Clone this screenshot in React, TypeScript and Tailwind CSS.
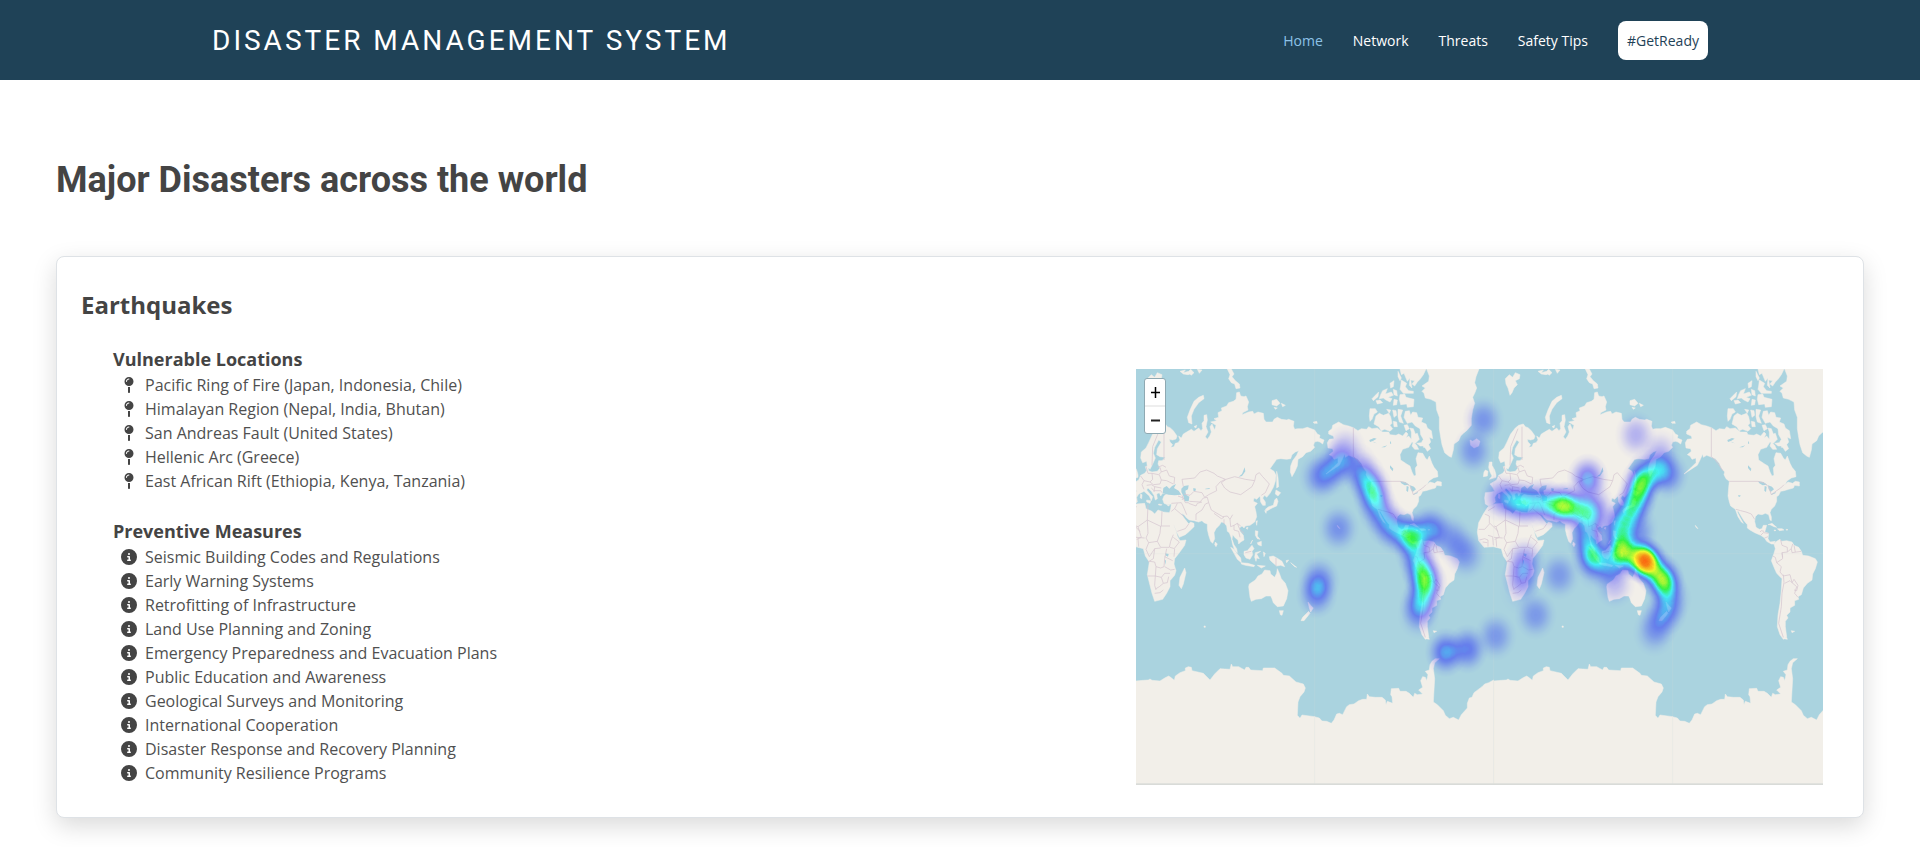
import React from "react";
import { FaMapPin, FaCircleInfo } from "react-icons/fa6";

const locations = [
  "Pacific Ring of Fire (Japan, Indonesia, Chile)",
  "Himalayan Region (Nepal, India, Bhutan)",
  "San Andreas Fault (United States)",
  "Hellenic Arc (Greece)",
  "East African Rift (Ethiopia, Kenya, Tanzania)",
];

const measures = [
  "Seismic Building Codes and Regulations",
  "Early Warning Systems",
  "Retrofitting of Infrastructure",
  "Land Use Planning and Zoning",
  "Emergency Preparedness and Evacuation Plans",
  "Public Education and Awareness",
  "Geological Surveys and Monitoring",
  "International Cooperation",
  "Disaster Response and Recovery Planning",
  "Community Resilience Programs",
];

// Eastern hemisphere coastlines, lon 0 at x=48, lon 180 at x=584.
const eastLand = [
  // Eurasia
  "M136 192L142 200 150 203 160 212 171 228 168 237 158 240 148 238 150 246 158 254 152 262 162 260 166 250 174 248 180 240 176 228 184 234 190 222 200 216 214 208 222 214 236 204 243 212 248 206 246 190 252 182 252 166 260 164 262 180 258 200 264 216 256 230 262 238 269 228 274 216 270 200 276 192 284 210 288 196 272 186 290 182 282 176 296 172 294 158 306 152 304 144 320 138 326 128 340 124 348 118 350 98 358 96 362 108 372 110 378 108 386 126 382 140 384 150 368 158 366 164 386 156 398 154 402 162 414 156 430 160 432 178 438 186 458 186 462 178 472 172 484 178 500 180 506 178 522 184 520 198 524 208 532 206 548 206 562 202 584 210 592 222 600 226 598 234 612 240 608 252 600 246 592 244 584 246 580 256 584 262 572 274 558 278 548 290 534 298 532 318 524 336 516 350 511 336 512 318 518 302 530 286 536 272 526 276 516 284 512 296 500 298 482 296 470 298 460 312 450 326 462 334 468 346 466 364 460 382 450 400 440 412 434 406 428 414 436 426 436 436 428 436 422 426 420 408 410 418 402 414 400 424 412 430 404 440 408 456 410 470 404 486 390 496 376 498 372 504 366 498 358 504 360 514 370 526 372 540 362 546 356 552 354 540 346 534 338 524 336 538 342 554 350 566 352 578 344 570 338 554 334 534 328 518 322 514 320 498 312 488 304 486 298 496 288 506 282 518 284 536 278 550 272 544 266 526 262 508 262 492 252 488 246 482 236 486 222 482 208 480 200 474 192 464 184 460 192 474 200 484 206 492 212 486 222 490 222 500 208 514 196 524 178 532 172 520 164 500 152 476 148 460 152 446 154 432 142 434 132 430 128 418 132 408 140 402 128 400 122 408 118 398 110 402 112 416 106 420 102 406 94 394 84 384 80 390 90 402 98 410 94 422 88 408 72 394 64 398 56 402 50 412 52 426 42 434 32 438 22 432 20 414 22 398 40 396 50 394 44 382 36 372 46 366 56 360 62 346 74 340 80 332 76 320 84 318 86 332 96 336 112 334 120 324 114 312 116 302 126 302 136 292 120 290 110 284 112 266 124 246 116 240 104 262 100 280 106 294 98 312 90 328 82 320 80 304 68 308 62 294 64 276 78 264 86 248 98 222 112 204 122 196Z",
  // Africa
  "M30 440L48 432 74 430 78 446 96 454 104 462 114 450 130 456 148 458 152 470 160 492 168 512 172 528 180 542 198 540 194 556 178 578 164 596 162 612 168 632 164 646 150 662 150 680 140 700 128 718 104 724 96 700 88 668 82 644 88 606 76 588 70 566 46 560 18 562 2 542 -2 516 2 488 16 462Z",
  "M194 624L198 638 190 672 184 686 177 676 180 652Z",
  // British Isles
  "M34 306L42 306 42 316 50 330 54 344 54 352 34 358 42 348 36 336 32 322Z",
  "M22 330L30 334 28 348 16 350 18 336Z",
  // Mediterranean islands
  "M80 420L92 422 90 430 80 426ZM62 402L66 404 65 416 61 414ZM116 432L126 434 124 436 116 435ZM142 436L148 434 147 438Z",
  // Svalbard and Arctic islands
  "M82 56L94 44 104 52 112 38 126 44 124 56 112 62 118 74 108 84 102 98 96 106 90 84 84 72Z",
  "M250 106L252 116 236 128 222 148 214 168 216 192 206 188 202 172 210 150 222 124 236 112Z",
  "M180 34L196 30 190 38 206 34 212 28 222 38 204 44 190 42ZM232 28L246 30 238 40ZM206 38L220 40 214 46Z",
  "M322 27L334 27 342 42 336 50 346 62 358 72 360 84 348 86 344 72 334 68 326 56 330 44Z",
  "M456 122L470 118 480 130 470 138 456 134ZM484 130L496 136 488 140ZM462 142L472 144 466 148ZM580 186L590 184 592 190 582 190ZM222 200L230 196 228 204Z",
  // Japan and Sakhalin
  "M436 448L446 440 460 436 464 420 470 414 474 424 470 438 456 444 442 452ZM468 390L482 398 474 408 466 402ZM434 452L440 450 438 460ZM470 334L474 352 476 380 470 384 470 360Z",
  "M408 484L412 482 410 496ZM378 504L384 502 382 508ZM286 546L292 552 288 560 284 554Z",
  // Maritime Southeast Asia
  "M406 512L414 514 412 528 420 538 412 536 406 526ZM412 548L424 544 424 558 414 554ZM398 540L392 552 394 546Z",
  "M332 562L340 566 352 582 362 594 364 608 352 598 342 580ZM364 608L384 610 404 616 402 620 376 616 364 612ZM372 574L382 572 396 556 402 566 396 574 398 584 390 598 378 594 372 584ZM406 578L422 574 410 582 418 596 410 594 408 604 404 592ZM412 616L436 618 424 624ZM430 576L436 580 432 590Z",
  "M448 590L460 588 474 596 486 604 494 620 482 616 470 618 456 606 450 600ZM498 602L506 600 500 608ZM512 608L530 622 524 620Z",
  // Australia and New Zealand
  "M472 626L478 640 484 656 496 670 504 692 500 716 490 738 472 740 460 728 456 716 452 708 438 708 424 716 408 718 394 724 390 712 386 680 388 672 406 660 414 648 426 642 434 630 450 632 452 642 464 652 470 640ZM478 752L490 752 486 766 481 764Z",
  "M564 726L572 736 580 744 572 756 568 744ZM566 754L570 760 552 782 543 782 548 772ZM252 798L256 798 256 802 252 802Z",
  // Antarctica
  "M47 963L70 961 85 960 90 957 96 961 120 963 134 954 146 948 152 952 163 961 166 948 180 938 196 932 196 924 205 920 214 922 216 932 250 940 258 948 270 960 284 942 300 926 330 928 334 912 338 920 356 920 374 930 378 922 386 922 392 930 428 932 430 924 464 924 486 940 490 946 508 948 528 966 550 972 556 984 552 996 540 1010 534 1026 532 1066 540 1075 546 1065 584 1070V1275H47Z",
].join("");

// Western hemisphere coastlines, lon -180 at x=248, lon 0 at x=785.
const westLand = [
  // Mainland North America
  "M320 186L334 194 350 198 364 203 378 212 388 206 404 208 410 200 420 206 436 204 446 212 452 216 470 216 474 224 492 226 500 222 512 228 522 216 528 222 522 234 530 228 538 238 538 216 534 204 544 206 550 222 556 220 562 238 550 250 540 246 530 262 512 268 504 284 506 300 524 312 534 318 540 336 546 348 552 346 550 324 556 316 552 296 558 278 572 280 580 294 586 300 592 288 600 310 606 322 616 334 618 350 604 354 592 362 584 374 594 366 608 370 616 364 628 366 628 378 614 376 610 384 596 388 582 392 572 394 566 406 560 410 560 424 554 438 544 448 540 458 544 470 544 482 540 480 536 464 526 460 516 464 504 462 496 470 494 484 498 502 508 508 516 506 520 496 530 496 526 510 524 516 536 520 534 536 540 546 556 544 552 552 544 552 530 544 524 534 512 526 494 518 480 510 472 504 472 494 462 482 452 466 444 452 442 456 450 472 460 490 454 486 444 470 436 448 422 438 418 426 414 408 416 382 418 364 408 356 402 344 404 336 394 324 388 310 376 296 366 292 350 286 340 292 338 282 330 300 322 316 306 326 282 342 302 324 318 308 318 294 306 298 300 288 292 284 304 274 302 266 288 264 286 248 292 238 306 236 304 228 290 222 290 214 300 206 302 196Z",
  // Caribbean
  "M534 494L546 490 560 502 552 500 540 494ZM562 506L576 506 582 510 568 512ZM552 510L558 511 554 513ZM588 508L594 509 590 511ZM316 496L324 506 318 502Z",
  // South America
  "M552 552L560 544 570 538 574 544 590 542 606 546 612 556 626 562 634 574 638 586 656 588 676 596 682 606 676 626 668 642 666 660 652 670 640 684 634 704 624 710 626 718 614 722 614 736 600 744 600 756 590 766 594 774 586 784 586 800 590 830 580 838 570 824 562 800 564 764 570 730 574 690 576 656 560 640 552 622 544 602 552 580 556 566Z",
  "M604 812L614 814 606 818ZM580 836L590 832 592 838Z",
  // Greenland and Iceland
  "M584 27H741L732 50 728 68 734 84 728 100 722 112 728 130 722 150 718 176 718 196 704 212 696 218 686 228 680 242 666 252 664 270 658 292 650 288 638 278 630 254 626 232 622 206 622 172 614 150 612 126 596 118 580 114 576 100 570 94 580 84 570 78 590 64 592 48Z",
  "M714 240L722 244 734 236 744 244 740 258 726 264 716 256Z",
  // Canadian archipelago
  "M504 27H582L574 44 564 58 556 66 548 78 540 72 548 62 536 60 540 84 532 76 534 54 526 64 516 40 508 44ZM498 34L508 54 504 62 498 50ZM508 60L524 70 520 80 530 92 544 94 544 100 514 100 504 88 506 78Z",
  "M504 104L518 102 522 112 546 118 544 140 526 142 524 132 506 134 502 118ZM474 70L486 62 484 80 476 84ZM452 92L466 86 460 102 478 96 484 106 468 112 480 116 474 126 462 120 454 114 442 116 446 104ZM430 106L440 96 438 110 424 122 420 116ZM484 88L494 92 496 108 486 104ZM486 118L496 120 494 134 484 136ZM432 122L444 120 452 128 436 132Z",
  "M414 146L430 146 436 156 426 162 420 178 414 184 412 168ZM432 168L442 160 454 166 470 160 476 170 480 190 474 196 482 206 474 214 458 208 448 212 440 200 426 192ZM482 150L492 152 494 166 486 172ZM498 148L512 150 506 168 514 190 502 186 498 170ZM484 184L494 186 496 200 486 200ZM464 148L476 150 472 160Z",
  "M520 154L532 152 536 166 542 156 554 158 558 172 572 174 568 186 582 192 586 204 598 212 602 236 592 232 596 246 590 254 596 266 586 274 576 258 564 258 554 250 568 248 574 238 566 224 564 206 550 198 540 186 526 190 516 172ZM516 196L526 194 532 206 522 212ZM544 246L554 256 560 268 548 268 540 258ZM576 254L582 262 574 262Z",
  // Antarctic coast
  "M247 1070L262 1074 270 1083 284 1084 298 1090 306 1080 314 1062 322 1060 332 1064 344 1040 352 1034 366 1032 380 1022 392 1018 404 1018 406 1002 412 1010 430 1012 450 1012 460 1020 462 1034 466 1024 482 1030 480 1010 476 1004 478 986 500 985 504 994 522 994 532 1000 544 1012 548 1000 556 1004 572 1002 560 990 572 982 566 962 572 950 580 952 584 962 588 944 580 934 592 930 594 914 600 904 610 896 622 896 608 908 604 926 608 956 604 1026 616 1034 634 1052 640 1066 652 1076 664 1072 680 1080 688 1064 706 1044 706 1030 712 1014 720 1012 726 998 750 980 758 972 770 968 785 960V1275H247Z",
].join("");

const eastWater =
  "M128 400L130 384 140 378 148 386 156 378 168 372 162 384 176 392 184 404 164 406 146 404ZM184 386L192 378 206 376 204 388 196 392 198 404 208 410 206 424 194 424 190 408 184 396ZM220 384L228 386 226 394 220 392ZM374 322L376 334 366 348 356 350 366 342ZM256 386L270 384 268 387 256 388ZM136 580L146 582 144 590 136 586ZM138 600L136 614 134 602Z";
const westWater =
  "M504 364L520 366 532 374 518 376 508 370ZM524 378L530 380 528 396 523 392ZM534 376L546 380 552 388 542 396 536 388ZM544 402L558 396 556 400 544 405ZM412 240L426 234 434 236 424 242 414 246ZM420 244L434 250 428 248ZM448 262L466 256 458 262ZM474 316L484 326 482 334 474 324ZM444 406L452 406 450 410 446 410ZM474 242L478 250 474 252Z";

const eastBorders =
  "M78 320L84 340 96 340 116 344 124 336 120 322M62 348L72 362 66 374 72 388M72 362L90 366 98 358 96 340M90 366L100 374 120 372 124 360 118 344M80 376L94 374 104 380 124 384M94 384L102 392 122 392 126 398M104 380L102 396M124 336L140 330 148 348 164 352 162 372M132 300L132 200M96 316L98 260 120 206M124 360L140 362 160 372M112 322L128 316 138 322M190 380L186 358 224 354 240 336 260 330 282 340 292 348 316 358 300 366 288 380 290 392 266 404 254 412 246 398 222 394 210 406 192 402M304 368L318 358 344 350 376 358 404 362 396 380 362 404 330 396 314 384ZM404 362L408 344 418 338 428 350 448 372 436 398 424 406M208 424L240 426 250 414 262 412 266 428 256 432 246 450 228 462 228 480M206 430L228 438 232 430 246 426M266 428L274 450 308 470 322 468 330 478 338 464M282 460L304 476 312 472M312 478L312 492M330 478L332 500 342 496 352 490 362 498M342 496L342 510 356 514 360 532M352 490L360 510 372 520M154 430L184 428 190 440 200 464M186 406L196 428 206 428M172 430L164 446 154 454M164 446L192 470M172 514L196 506 206 492M174 408L190 414 186 420M84 434L82 480 54 500 48 498M126 454L124 498 150 498M82 480L124 500M54 500L64 532 50 538M82 480L84 520 78 534 86 548 112 544 120 520 122 498M48 532L74 534M112 544L122 562 148 562 152 544 160 524M150 562L164 566 162 590M160 532L178 546 164 564M86 548L78 568 88 590 104 566 122 564M104 566L100 596 84 606M88 604L104 606 108 620 122 624 132 620 134 596 140 566M108 620L106 648 82 648M106 648L124 652 134 640 150 640M134 590L158 602M134 620L152 630 164 628M106 648L104 676 108 690M124 652L130 670 118 680 108 686M130 670L142 668 146 650M104 700L120 698 130 690M30 452L50 440M20 462L34 468 34 490M2 508L20 508 36 490 60 514M4 540L20 536 30 540 30 560M30 526L44 530 46 556M468 594L468 618M376 578L394 574M14 546L28 548M54 536L56 560";
const westBorders =
  "M364 203V290L376 300 388 316 398 332M418 364H504L520 368 536 380 544 404 560 392 572 384 582 374M438 448L452 452 468 456 484 462 494 478M510 516L514 512 522 514M512 526L520 518 536 520M524 534L534 530M572 540L576 556 592 562 592 576 576 578 578 596 560 608 556 592 548 588M592 576L604 566 608 552M604 566L606 578 620 576 634 574M612 556L616 576M576 578L578 592M560 608L574 620 570 636 580 648 600 644 606 668 620 680 614 700M580 644L582 668 576 700 574 740 566 790 580 832M584 670L600 662 606 668M606 668L612 658 624 676 620 692 612 690M614 700L624 712";

const graticule = "M584 27V1270M1121 27V1270M1658 27V1270M48 581H2109";

// Earthquake density samples: x, y, intensity.
const quakes: [number, number, number][] = [
  [600, 350, 0.32], [628, 335, 0.28], [658, 308, 0.38], [676, 268, 0.24],
  [655, 505, 0.31], [597, 662, 0.36], [590, 702, 0.38],
  [712, 320, 0.24], [734, 350, 0.36], [754, 382, 0.42], [762, 414, 0.4], [776, 450, 0.34],
  [800, 488, 0.37], [828, 512, 0.34], [860, 526, 0.34], [878, 532, 0.42], [904, 512, 0.2],
  [936, 508, 0.42], [985, 530, 0.22], [1015, 556, 0.2], [1038, 585, 0.24],
  [886, 574, 0.36], [898, 612, 0.36], [908, 642, 0.42], [920, 668, 0.48], [912, 702, 0.36], [900, 736, 0.38], [896, 764, 0.22],
  [1060, 272, 0.29], [1090, 180, 0.29],
  [978, 877, 0.5], [1042, 867, 0.42], [1127, 828, 0.28], [1247, 765, 0.28], [1317, 645, 0.27],
  [1214, 604, 0.36], [1206, 652, 0.36], [1202, 692, 0.08],
  [1142, 412, 0.34], [1176, 420, 0.3], [1204, 430, 0.42], [1236, 430, 0.34], [1270, 426, 0.38],
  [1302, 438, 0.4], [1332, 438, 0.54], [1344, 438, 0.24], [1370, 446, 0.34], [1400, 458, 0.42],
  [1403, 354, 0.48], [1412, 400, 0.14], [1426, 444, 0.22], [1446, 480, 0.18],
  [1400, 506, 0.3], [1404, 545, 0.36], [1416, 588, 0.52], [1424, 616, 0.2], [1454, 614, 0.28], [1482, 614, 0.28],
  [1504, 574, 0.6], [1500, 540, 0.34], [1500, 500, 0.44], [1522, 464, 0.4],
  [1544, 434, 0.44], [1554, 402, 0.42], [1564, 370, 0.54], [1582, 340, 0.4], [1618, 328, 0.34],
  [1644, 344, 0.34], [1620, 280, 0.22], [1548, 225, 0.26], [1552, 506, 0.24], [1550, 545, 0.16],
  [1530, 590, 0.3], [1560, 596, 0.44], [1576, 602, 0.8], [1590, 614, 0.36], [1608, 636, 0.36], [1630, 656, 0.55], [1638, 682, 0.42],
  [1652, 716, 0.26], [1640, 752, 0.36], [1618, 784, 0.26], [1602, 816, 0.22], [1484, 672, 0.22],
];

function Hemisphere({ land, water, borders, x }: { land: string; water: string; borders: string; x: number }) {
  return (
    <g transform={`translate(${x} 0)`}>
      <path d={land} fill="#f2efe9" stroke="#f2efe9" strokeWidth="1.5" />
      <path d={water} fill="#aad3df" />
      <path d={borders} fill="none" stroke="#d6c7d1" strokeWidth="2.2" strokeLinejoin="round" />
    </g>
  );
}

function WorldMap() {
  return (
    <div className="relative h-[416px] w-[687px] overflow-hidden">
      <svg className="block h-full w-full" viewBox="48 27 2061 1248" preserveAspectRatio="none">
        <defs>
          <radialGradient id="spot">
            <stop offset="0" stopColor="#000" stopOpacity="1" />
            <stop offset="0.2" stopColor="#000" stopOpacity="0.93" />
            <stop offset="0.4" stopColor="#000" stopOpacity="0.7" />
            <stop offset="0.6" stopColor="#000" stopOpacity="0.38" />
            <stop offset="0.8" stopColor="#000" stopOpacity="0.12" />
            <stop offset="1" stopColor="#000" stopOpacity="0" />
          </radialGradient>
          <filter id="heat" filterUnits="userSpaceOnUse" x="0" y="0" width="2200" height="1300" colorInterpolationFilters="sRGB">
            <feColorMatrix type="matrix" values="0 0 0 1 0  0 0 0 1 0  0 0 0 1 0  0 0 0 1 0" />
            <feComponentTransfer>
              <feFuncR type="table" tableValues="0 0 0 0 0 0 0 0 1 1 1" />
              <feFuncG type="table" tableValues="0 0 0 0 0 0.5 1 1 1 0.5 0" />
              <feFuncB type="table" tableValues="1 1 1 1 1 1 1 0 0 0 0" />
            </feComponentTransfer>
          </filter>
        </defs>
        <rect x="48" y="27" width="2061" height="1248" fill="#aad3df" />
        <Hemisphere land={eastLand} water={eastWater} borders={eastBorders} x={0} />
        <Hemisphere land={eastLand} water={eastWater} borders={eastBorders} x={1074} />
        <Hemisphere land={westLand} water={westWater} borders={westBorders} x={336} />
        <Hemisphere land={westLand} water={westWater} borders={westBorders} x={1410} />
        <path d={graticule} stroke="#d9dde0" strokeOpacity="0.18" strokeWidth="3" />
        <rect x="48" y="1270" width="2061" height="5" fill="#d9dbd8" />
        <g filter="url(#heat)">
          {quakes.map(([x, y, a], i) => (
            <ellipse key={i} cx={x} cy={y} rx="64" ry="75" fill="url(#spot)" fillOpacity={a} />
          ))}
        </g>
      </svg>
      <div className="absolute left-2 top-[9px] flex h-[56px] w-[22px] flex-col rounded-[3px] border border-[#8fa9b2] bg-white">
        <button className="flex flex-1 items-center justify-center border-b-2 border-[#eee]">
          <svg className="h-[11px] w-[9px]" viewBox="0 0 9 11" preserveAspectRatio="none"><path d="M4.5 0V11M0 5.5H9" stroke="#000" strokeWidth="1.5" /></svg>
        </button>
        <button className="flex flex-1 items-center justify-center">
          <svg className="h-[11px] w-[9px]" viewBox="0 0 9 11"><path d="M0 5.5H9" stroke="#222" strokeWidth="2" /></svg>
        </button>
      </div>
    </div>
  );
}

export default function App() {
  return (
    <div className="h-[847px] overflow-hidden bg-white font-['Open_Sans',sans-serif] text-[#444444]">
      <header className="flex h-20 items-center justify-between bg-[#1f4257] pl-[212px] pr-[212px]">
        <h1 className="pt-0.5 font-['Roboto',sans-serif] text-[28px] leading-none tracking-[3px] text-white">DISASTER MANAGEMENT SYSTEM</h1>
        <nav className="flex items-center pt-px text-sm font-medium text-white">
          <a className="mr-[30px] pt-px font-normal text-[#8dc2e8]">Home</a>
          <a className="mr-[30px] pt-px">Network</a>
          <a className="mr-[30px] pt-px">Threats</a>
          <a className="mr-[30px] pt-px">Safety Tips</a>
          <a className="flex h-[39px] w-[90px] items-center justify-center rounded-lg bg-white pt-px font-normal text-[#1f4257]">#GetReady</a>
        </nav>
      </header>
      <main className="px-14 pt-[76px]">
        <h2 className="pt-px font-['Roboto',sans-serif] text-[36px] font-bold leading-[47px]">Major Disasters across the world</h2>
        <section className="mt-[52px] flex h-[562px] justify-between rounded-lg border border-[#dee2e6] bg-white pl-6 pr-10 shadow-[0_8px_24px_rgba(0,0,0,0.15)]">
          <div className="pt-[33px]">
            <h3 className="text-2xl font-bold leading-[29px]">Earthquakes</h3>
            <div className="pl-8 pt-[29px]">
              <h4 className="text-lg font-bold leading-[22px]">Vulnerable Locations</h4>
              <ul className="pl-2 pt-[3px]">
                {locations.map((t) => (
                  <li key={t} className="flex h-6 items-center gap-2"><FaMapPin className="size-4" /><span className="text-[#505050]">{t}</span></li>
                ))}
              </ul>
            </div>
            <div className="pl-8 pt-[27px]">
              <h4 className="text-lg font-bold leading-[22px]">Preventive Measures</h4>
              <ul className="pl-2 pt-[3px]">
                {measures.map((t) => (
                  <li key={t} className="flex h-6 items-center gap-2"><FaCircleInfo className="size-4" /><span className="text-[#505050]">{t}</span></li>
                ))}
              </ul>
            </div>
          </div>
          <div className="pt-[112px]">
            <WorldMap />
          </div>
        </section>
      </main>
    </div>
  );
}
